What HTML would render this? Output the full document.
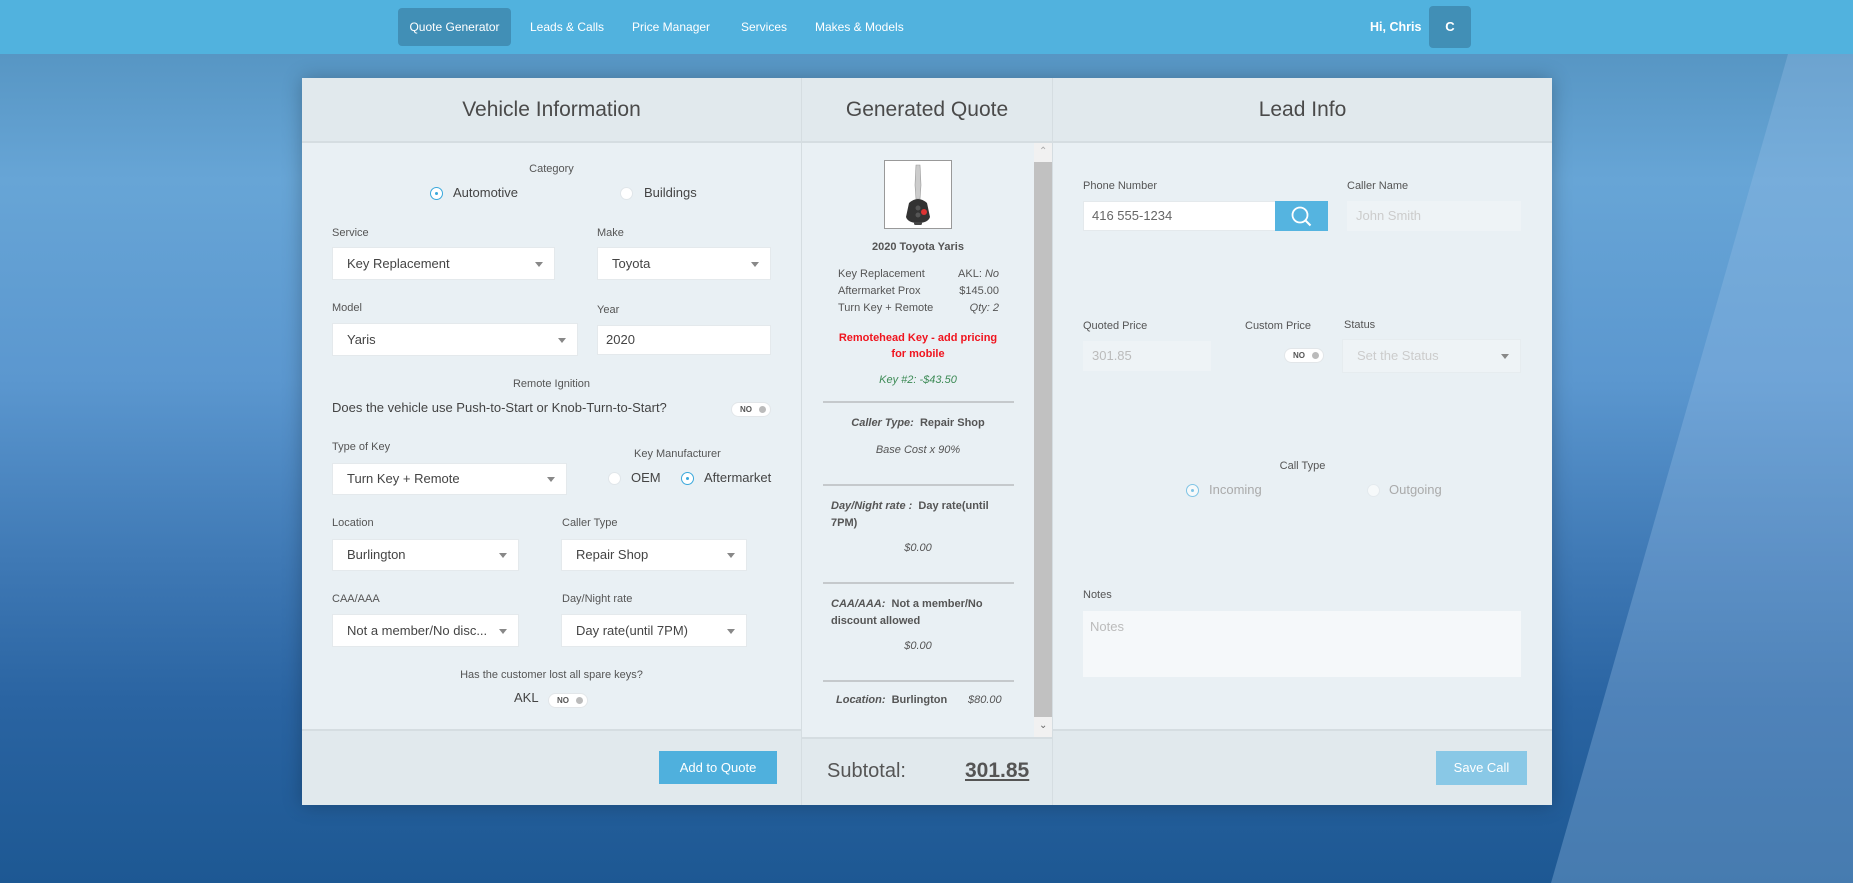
<!DOCTYPE html>
<html><head><meta charset="utf-8"><style>
*{box-sizing:border-box;margin:0;padding:0}
body{width:1853px;height:883px;overflow:hidden;position:relative;font-family:"Liberation Sans",sans-serif;color:#555;
background:linear-gradient(180deg,#5796c4 54px,#67a5d6 180px,#5b97cf 380px,#3f79b5 560px,#2a64a2 700px,#1d5893 883px);}
.a{position:absolute}
.nav{left:0;top:0;width:1853px;height:54px;background:#51b2de}
.ni{position:absolute;top:8px;height:38px;line-height:38px;color:#fff;font-size:12px}
.stripe{left:0;top:54px;width:1853px;height:829px;background:rgba(150,190,230,.35);clip-path:polygon(1788px 0,1853px 0,1853px 829px,1551px 829px)}
.panel{left:302px;top:78px;width:1250px;height:727px;background:#e9f0f4;box-shadow:0 0 18px rgba(0,0,0,.25)}
.hd{position:absolute;top:0;height:65px;background:#e1e9ed;border-bottom:2px solid #d5dde1;font-size:21px;color:#4a4a4a;text-align:center;line-height:64px}
.ft{position:absolute;background:#e1e9ed;border-top:2px solid #d5dde1}
.lbl{position:absolute;font-size:11px;color:#555;white-space:nowrap}
.sel{position:absolute;background:#fff;border:1px solid #e4e9ec;font-size:13px;color:#444;padding-left:14px;white-space:nowrap;overflow:hidden}
.sel:after{content:"";position:absolute;right:11px;top:50%;margin-top:-2px;border:4px solid transparent;border-top:5px solid #888}
.inp{position:absolute;background:#fff;border:1px solid #e4e9ec;font-size:13px;color:#444;padding-left:8px}
.rad{position:absolute;width:13px;height:13px;border-radius:50%;background:#fff;border:1px solid #e0e6ea}
.rad.on{border:1.5px solid #3aa8dc}
.rad.on:after{content:"";position:absolute;left:3.5px;top:3.5px;width:3px;height:3px;border-radius:50%;background:#3aa8dc}
.rt{position:absolute;font-size:13px;color:#444}
.tg{position:absolute;width:40px;height:15px;border-radius:8px;background:#fff;border:1px solid #e2e6e9;font-size:8px;font-weight:bold;color:#555;line-height:13px;padding-left:8px}
.tg:after{content:"";position:absolute;right:4px;top:3px;width:7px;height:7px;border-radius:50%;background:#bbb}
.q{position:absolute;font-size:11px;color:#555;white-space:nowrap}
.hr{position:absolute;left:823px;width:191px;height:2px;background:#c5c9cc}
.c{text-align:center}
.btn{position:absolute;color:#fff;font-size:13px;text-align:center}
</style></head><body>
<div class="a stripe"></div>
<div class="a nav"></div>
<div class="ni" style="left:398px;width:113px;background:#418fb6;border-radius:4px;text-align:center">Quote Generator</div>
<div class="ni" style="left:530px">Leads &amp; Calls</div>
<div class="ni" style="left:632px">Price Manager</div>
<div class="ni" style="left:741px">Services</div>
<div class="ni" style="left:815px">Makes &amp; Models</div>
<div class="ni" style="left:1370px;font-weight:bold;font-size:12.5px">Hi, Chris</div>
<div class="a" style="left:1429px;top:6px;width:42px;height:42px;background:#418fb6;border-radius:4px;color:#fff;font-weight:bold;font-size:13px;text-align:center;line-height:42px">C</div>

<div class="a panel"></div>
<div class="a" style="left:801px;top:78px;width:1px;height:727px;background:#d5dde1"></div>
<div class="a" style="left:1052px;top:78px;width:1px;height:727px;background:#d5dde1"></div>
<div class="hd" style="left:302px;top:78px;width:499px">Vehicle Information</div>
<div class="hd" style="left:802px;top:78px;width:250px">Generated Quote</div>
<div class="hd" style="left:1053px;top:78px;width:499px">Lead Info</div>
<div class="ft" style="left:302px;top:729px;width:499px;height:76px"></div>
<div class="ft" style="left:802px;top:737px;width:250px;height:68px"></div>
<div class="ft" style="left:1053px;top:729px;width:499px;height:76px"></div>

<!-- left column -->
<div class="lbl c" style="left:302px;width:499px;top:163px">Category</div>
<div class="rad on" style="left:430px;top:187px"></div><div class="rt" style="left:453px;top:185px">Automotive</div>
<div class="rad" style="left:620px;top:187px"></div><div class="rt" style="left:644px;top:185px">Buildings</div>
<div class="lbl" style="left:332px;top:227px">Service</div>
<div class="sel" style="left:332px;top:247px;width:223px;height:33px;line-height:31px">Key Replacement</div>
<div class="lbl" style="left:597px;top:227px">Make</div>
<div class="sel" style="left:597px;top:247px;width:174px;height:33px;line-height:31px">Toyota</div>
<div class="lbl" style="left:332px;top:302px">Model</div>
<div class="sel" style="left:332px;top:323px;width:246px;height:33px;line-height:31px">Yaris</div>
<div class="lbl" style="left:597px;top:304px">Year</div>
<div class="inp" style="left:597px;top:325px;width:174px;height:30px;line-height:28px">2020</div>
<div class="lbl c" style="left:302px;width:499px;top:378px">Remote Ignition</div>
<div class="rt" style="left:332px;top:400px">Does the vehicle use Push-to-Start or Knob-Turn-to-Start?</div>
<div class="tg" style="left:731px;top:402px">NO</div>
<div class="lbl" style="left:332px;top:441px">Type of Key</div>
<div class="sel" style="left:332px;top:463px;width:235px;height:32px;line-height:30px">Turn Key + Remote</div>
<div class="lbl" style="left:634px;top:448px">Key Manufacturer</div>
<div class="rad" style="left:608px;top:472px"></div><div class="rt" style="left:631px;top:470px">OEM</div>
<div class="rad on" style="left:681px;top:472px"></div><div class="rt" style="left:704px;top:470px">Aftermarket</div>
<div class="lbl" style="left:332px;top:517px">Location</div>
<div class="sel" style="left:332px;top:539px;width:187px;height:32px;line-height:30px">Burlington</div>
<div class="lbl" style="left:562px;top:517px">Caller Type</div>
<div class="sel" style="left:561px;top:539px;width:186px;height:32px;line-height:30px">Repair Shop</div>
<div class="lbl" style="left:332px;top:593px">CAA/AAA</div>
<div class="sel" style="left:332px;top:614px;width:187px;height:33px;line-height:31px">Not a member/No disc...</div>
<div class="lbl" style="left:562px;top:593px">Day/Night rate</div>
<div class="sel" style="left:561px;top:614px;width:186px;height:33px;line-height:31px">Day rate(until 7PM)</div>
<div class="lbl c" style="left:302px;width:499px;top:669px">Has the customer lost all spare keys?</div>
<div class="rt" style="left:514px;top:690px">AKL</div>
<div class="tg" style="left:548px;top:693px">NO</div>
<div class="btn" style="left:659px;top:751px;width:118px;height:33px;line-height:33px;background:#4fb0dd">Add to Quote</div>

<!-- middle column -->
<div class="a" style="left:1034px;top:143px;width:18px;height:594px;background:#f1f1f1"></div>
<div class="a" style="left:1034px;top:162px;width:18px;height:555px;background:#c1c1c1"></div>
<div class="a" style="left:1039px;top:146px;font-size:10px;color:#aaa">&#8963;</div>
<div class="a" style="left:1039px;top:720px;font-size:10px;color:#666">&#8964;</div>
<div class="a" style="left:884px;top:160px;width:68px;height:69px;background:#fff;border:1px solid #999">
<svg width="66" height="67" viewBox="0 0 66 67"><path d="M31 4h4l1 20-1 14h-4l-1-14z" fill="#ccc" stroke="#999" stroke-width=".6"/><path d="M24 42q9-8 18 0l3 14q-2 6-12 6t-12-6z" fill="#333"/><circle cx="33" cy="47" r="2.5" fill="#555"/><circle cx="33" cy="54" r="2.5" fill="#555"/><circle cx="39" cy="51" r="3" fill="#d33"/><rect x="29" y="61" width="8" height="3" rx="1.5" fill="#444"/></svg></div>
<div class="q c" style="left:802px;width:232px;top:241px;font-weight:bold">2020 Toyota Yaris</div>
<div class="q" style="left:838px;top:268px">Key Replacement</div><div class="q" style="left:958px;top:268px;width:41px;text-align:right">AKL: <i>No</i></div>
<div class="q" style="left:838px;top:285px">Aftermarket Prox</div><div class="q" style="left:950px;top:285px;width:49px;text-align:right">$145.00</div>
<div class="q" style="left:838px;top:302px">Turn Key + Remote</div><div class="q" style="left:950px;top:302px;width:49px;text-align:right"><i>Qty: 2</i></div>
<div class="q c" style="left:802px;width:232px;top:330px;color:#f0141e;font-weight:bold;line-height:16px;white-space:normal;padding:0 32px">Remotehead Key - add pricing for mobile</div>
<div class="q c" style="left:802px;width:232px;top:374px;color:#3c8a55;font-style:italic">Key #2: -$43.50</div>
<div class="hr" style="top:401px"></div>
<div class="q c" style="left:802px;width:232px;top:417px;font-weight:bold"><i>Caller Type:</i>&nbsp; Repair Shop</div>
<div class="q c" style="left:802px;width:232px;top:444px;font-style:italic">Base Cost x 90%</div>
<div class="hr" style="top:484px"></div>
<div class="q" style="left:831px;top:498px;font-weight:bold;line-height:17px"><i>Day/Night rate :</i>&nbsp; Day rate(until<br>7PM)</div>
<div class="q c" style="left:802px;width:232px;top:542px;font-style:italic">$0.00</div>
<div class="hr" style="top:582px"></div>
<div class="q" style="left:831px;top:596px;font-weight:bold;line-height:17px"><i>CAA/AAA:</i>&nbsp; Not a member/No<br>discount allowed</div>
<div class="q c" style="left:802px;width:232px;top:640px;font-style:italic">$0.00</div>
<div class="hr" style="top:680px"></div>
<div class="q" style="left:836px;top:694px;font-weight:bold"><i>Location:</i>&nbsp; Burlington</div>
<div class="q" style="left:968px;top:694px;font-style:italic">$80.00</div>
<div class="a" style="left:827px;top:760px;font-size:20px;color:#555">Subtotal:</div>
<div class="a" style="left:965px;top:759px;font-size:21px;font-weight:bold;color:#555;text-decoration:underline">301.85</div>

<!-- right column -->
<div class="lbl" style="left:1083px;top:180px">Phone Number</div>
<div class="inp" style="left:1083px;top:201px;width:193px;height:30px;line-height:28px;color:#666">416 555-1234</div>
<div class="a" style="left:1275px;top:201px;width:53px;height:30px;background:#55b4e0"><svg width="53" height="30"><circle cx="25" cy="14" r="7.5" fill="none" stroke="#fff" stroke-width="1.8"/><path d="M30.5 19.5l5 5" stroke="#fff" stroke-width="2"/></svg></div>
<div class="lbl" style="left:1347px;top:180px">Caller Name</div>
<div class="inp" style="left:1347px;top:201px;width:174px;height:30px;line-height:28px;background:#eef3f6;border-color:#eef3f6;color:#ccc">John Smith</div>
<div class="lbl" style="left:1083px;top:320px">Quoted Price</div>
<div class="inp" style="left:1083px;top:341px;width:128px;height:30px;line-height:28px;background:#eef3f6;border-color:#eef3f6;color:#bbb">301.85</div>
<div class="lbl" style="left:1245px;top:320px">Custom Price</div>
<div class="tg" style="left:1284px;top:348px">NO</div>
<div class="lbl" style="left:1344px;top:319px">Status</div>
<div class="sel" style="left:1342px;top:339px;width:179px;height:34px;line-height:32px;background:#eef3f6;border-color:#e6ecef;color:#ccc">Set the Status</div>
<div class="lbl c" style="left:1053px;width:499px;top:460px">Call Type</div>
<div class="rad on" style="left:1186px;top:484px;opacity:.6"></div><div class="rt" style="left:1209px;top:482px;color:#aaa">Incoming</div>
<div class="rad" style="left:1367px;top:484px;opacity:.6"></div><div class="rt" style="left:1389px;top:482px;color:#aaa">Outgoing</div>
<div class="lbl" style="left:1083px;top:589px">Notes</div>
<div class="a" style="left:1083px;top:611px;width:438px;height:66px;background:#f5f8fa;font-size:13px;color:#bbb;padding:8px 7px">Notes</div>
<div class="btn" style="left:1436px;top:751px;width:91px;height:34px;line-height:34px;background:#89c8e6">Save Call</div>
</body></html>
